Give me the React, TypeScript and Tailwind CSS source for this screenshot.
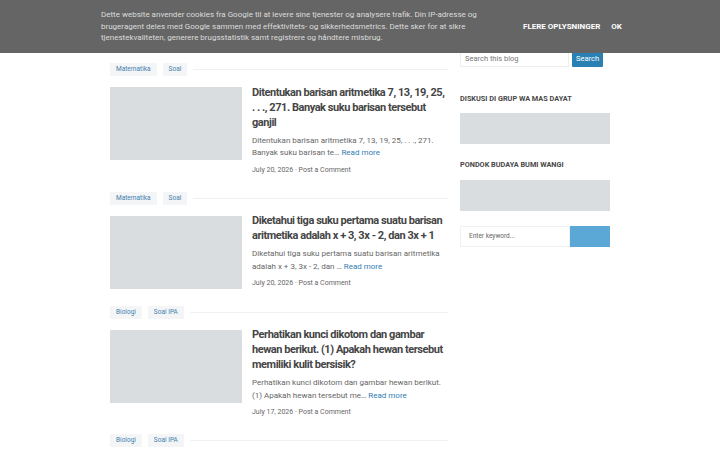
const posts = [
  {
    labels: ["Matematika", "Soal"],
    title: "Ditentukan barisan aritmetika 7, 13, 19, 25, . . ., 271. Banyak suku barisan tersebut ganjil",
    snippet: "Ditentukan barisan aritmetika 7, 13, 19, 25, . . ., 271. Banyak suku barisan te…",
    date: "July 20, 2026",
  },
  {
    labels: ["Matematika", "Soal"],
    title: "Diketahui tiga suku pertama suatu barisan aritmetika adalah x + 3, 3x - 2, dan 3x + 1",
    snippet: "Diketahui tiga suku pertama suatu barisan aritmetika adalah x + 3, 3x - 2, dan …",
    date: "July 20, 2026",
  },
  {
    labels: ["Biologi", "Soal IPA"],
    title: "Perhatikan kunci dikotom dan gambar hewan berikut. (1) Apakah hewan tersebut memiliki kulit bersisik?",
    snippet: "Perhatikan kunci dikotom dan gambar hewan berikut. (1) Apakah hewan tersebut me…",
    date: "July 17, 2026",
  },
];

const Labels = ({ labels }: { labels: string[] }) => (
  <div className="flex items-center gap-[6px] h-[13px]">
    {labels.map((l) => (
      <span
        key={l}
        className="h-[13px] px-[6px] flex items-center bg-[#f4f5f6] text-[#3f7fae] text-[6.5px] leading-[13px]"
      >
        {l}
      </span>
    ))}
    <div className="flex-1 h-px bg-[#f0f1f2]" />
  </div>
);

const Post = ({ p }: { p: (typeof posts)[number] }) => (
  <article className="pb-[17px]">
    <Labels labels={p.labels} />
    <div className="flex gap-[10px] mt-[11px]">
      <div className="w-[132px] h-[73px] shrink-0 bg-[#d9dddf]" />
      <div className="flex-1 -mt-[2.5px]">
        <h2 className="text-[11px] leading-[15px] font-bold tracking-[-0.45px] text-[#454545]">{p.title}</h2>
        <p className="mt-[5px] text-[8px] leading-[12.5px] text-[#666]">
          {p.snippet} <span className="text-[#2f7cb4]">Read more</span>
        </p>
        <div className="mt-[5px] text-[7px] leading-[10px] text-[#666]">
          {p.date} <span>·</span> Post a Comment
        </div>
      </div>
    </div>
  </article>
);

export default function App() {
  return (
    <div className="relative w-[720px] h-[450px] overflow-hidden bg-white font-['Roboto',sans-serif]">
      <div className="w-[500px] mx-auto flex gap-[12px]">
        <main className="w-[338px] pt-[63px]">
          {posts.map((p, i) => (
            <Post key={i} p={p} />
          ))}
          <Labels labels={["Biologi", "Soal IPA"]} />
        </main>

        <aside className="w-[150px] pt-[51px]">
          <div className="flex items-center gap-[3px]">
            <div className="w-[109px] h-[16px] border border-[#eceeef] px-[4px] flex items-center text-[7.5px] text-[#777]">
              Search this blog
            </div>
            <button className="h-[15px] px-[4px] bg-[#2a7fb3] text-white text-[7.5px] rounded-[1px]">
              Search
            </button>
          </div>

          <h3 className="mt-[27px] text-[7.3px] leading-[10px] font-bold text-[#474747]">
            DISKUSI DI GRUP WA MAS DAYAT
          </h3>
          <div className="mt-[9px] h-[31px] bg-[#d9dddf]" />

          <h3 className="mt-[16px] text-[7.3px] leading-[10px] font-bold text-[#474747]">
            PONDOK BUDAYA BUMI WANGI
          </h3>
          <div className="mt-[10px] h-[31px] bg-[#d9dddf]" />

          <div className="mt-[15px] flex h-[21px]">
            <div className="w-[110px] border border-[#f0f1f2] px-[8px] flex items-center text-[6.5px] text-[#666]">
              Enter keyword...
            </div>
            <div className="flex-1 bg-[#5ba8d6]" />
          </div>
        </aside>
      </div>

      <div className="absolute top-0 left-0 right-0 h-[53px] bg-[#656565] flex items-center">
        <p className="ml-[101px] w-[385px] text-[8px] leading-[11.5px] text-[#dcdcdc]">
          Dette website anvender cookies fra Google til at levere sine tjenester og analysere trafik. Din IP-adresse og brugeragent deles med Google sammen med effektivitets- og sikkerhedsmetrics. Dette sker for at sikre tjenestekvaliteten, generere brugsstatistik samt registrere og håndtere misbrug.
        </p>
        <div className="ml-[37px] flex gap-[11px] text-[8px] font-bold text-white">
          <span>FLERE OPLYSNINGER</span>
          <span>OK</span>
        </div>
      </div>
    </div>
  );
}
